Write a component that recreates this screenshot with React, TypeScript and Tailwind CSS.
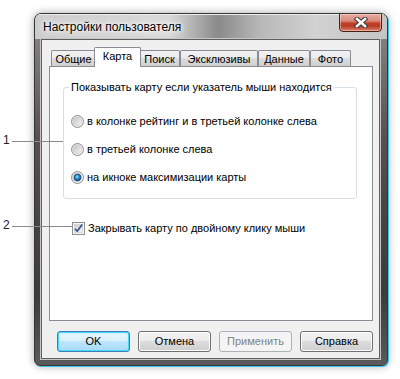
import React from "react";

const font = { fontFamily: '"Liberation Sans", Arial, sans-serif' };

function Radio({ checked }: { checked?: boolean }) {
  return (
    <svg width="13" height="13" viewBox="0 0 13 13" className="shrink-0">
      <defs>
        <linearGradient id="rg-ring" x1="0" y1="0" x2="1" y2="1">
          <stop offset="0" stopColor="#d8d8d8" />
          <stop offset="1" stopColor="#f8f8f8" />
        </linearGradient>
        <linearGradient id="rg-in" x1="0" y1="0" x2="1" y2="1">
          <stop offset="0" stopColor="#c2c2c2" />
          <stop offset="1" stopColor="#f6f6f6" />
        </linearGradient>
        <radialGradient id="rg-dot" cx="0.45" cy="0.4" r="0.6">
          <stop offset="0" stopColor="#8fe0ff" />
          <stop offset="0.45" stopColor="#2b93d6" />
          <stop offset="1" stopColor="#0a3f6e" />
        </radialGradient>
      </defs>
      <circle cx="6.5" cy="6.5" r="6" fill="url(#rg-ring)" stroke="#8e8f8f" strokeWidth="1" />
      <circle cx="6.5" cy="6.5" r="4.2" fill="url(#rg-in)" stroke="#c8c8c8" strokeWidth="0.6" />
      {checked && (
        <circle cx="6.5" cy="6.5" r="3.4" fill="url(#rg-dot)" stroke="#1a4f7a" strokeWidth="0.8" />
      )}
    </svg>
  );
}

function Checkbox() {
  return (
    <svg width="13" height="13" viewBox="0 0 13 13" className="shrink-0">
      <defs>
        <linearGradient id="cb-in" x1="0" y1="0" x2="1" y2="1">
          <stop offset="0" stopColor="#c9cdd3" />
          <stop offset="1" stopColor="#f4f4f4" />
        </linearGradient>
      </defs>
      <rect x="0.5" y="0.5" width="12" height="12" fill="#f4f4f4" stroke="#8e8f8f" />
      <rect x="2.5" y="2.5" width="8" height="8" fill="url(#cb-in)" stroke="#d0d3d8" strokeWidth="0.8" />
      <path d="M3 6.8 L5.2 9.2 L10.2 2.6" fill="none" stroke="#3a4f8a" strokeWidth="1.7" strokeLinejoin="round" />
    </svg>
  );
}

function CloseX() {
  return (
    <svg width="14" height="11" viewBox="0 0 14 11">
      <path d="M3 2 L11 9 M11 2 L3 9" stroke="#3a3a3a" strokeWidth="4.6" strokeLinecap="square" />
      <path d="M3 2 L11 9 M11 2 L3 9" stroke="#ffffff" strokeWidth="2.6" strokeLinecap="square" />
    </svg>
  );
}

function Tab({ label, w, selected }: { label: string; w: number; selected?: boolean }) {
  if (selected) {
    return (
      <div
        className="relative z-10 -mx-[2px] -mb-px h-[20px] flex items-start justify-center pt-[2px] bg-white border-t border-l border-r border-[#898c95] rounded-t-[2px] text-[11px] leading-[13px] text-black"
        style={{ width: w }}
      >
        {label}
      </div>
    );
  }
  return (
    <div
      className="h-[16px] flex items-center justify-center border-t border-l border-r border-[#898c95] rounded-t-[2px] bg-[linear-gradient(to_bottom,#f2f2f2_0%,#ebebeb_50%,#dddddd_50%,#cfcfcf_100%)] text-[11px] text-black leading-none pt-[2px]"
      style={{ width: w }}
    >
      {label}
    </div>
  );
}

function Button({ label, variant }: { label: string; variant?: "default" | "disabled" }) {
  const base =
    "w-[73px] h-[21px] rounded-[3px] border flex items-center justify-center text-[11px]";
  if (variant === "default") {
    return (
      <div
        className={`${base} border-[#3c7fb1] text-black bg-[linear-gradient(to_bottom,#eaf6fd_0%,#d9f0fc_50%,#bee6fd_50%,#a7d9f5_100%)] shadow-[inset_0_0_0_1px_#48d6fb,inset_0_0_2px_1px_#9ee2fb]`}
      >
        {label}
      </div>
    );
  }
  if (variant === "disabled") {
    return (
      <div className={`${base} border-[#adb2b5] text-[#838383] bg-[#f4f4f4]`}>{label}</div>
    );
  }
  return (
    <div
      className={`${base} border-[#707070] text-black bg-[linear-gradient(to_bottom,#f2f2f2_0%,#ebebeb_50%,#dddddd_50%,#cfcfcf_100%)] shadow-[inset_0_0_0_1px_#fcfcfc]`}
    >
      {label}
    </div>
  );
}

function Window() {
  return (
    <div className="w-[354px] h-[353px] rounded-t-[7px] rounded-b-[6px] border border-[#353535] flex flex-col overflow-hidden shadow-[1px_1px_0_#3ec7ef,0_0_8px_rgba(0,0,0,0.35)] bg-[linear-gradient(to_bottom,#8c8c8c_0%,#5b4f4f_35%,#4a4444_55%,#3c3c3c_80%,#5a5a5a_100%)]">
      {/* title bar */}
      <div className="h-[25px] shrink-0 flex items-start bg-[linear-gradient(to_right,#cdcdcd_0%,#d9d9d9_38%,#8a8a8a_52%,#b8b8b8_64%,#d2d2d2_80%,#c4c4c4_100%)] shadow-[inset_0_1px_0_#efefef]">
        <div className="pl-[8px] pt-[6px] text-[12px] leading-[14px] text-black [text-shadow:0_0_6px_#ffffff,0_0_10px_#ffffff,0_0_3px_#ffffff]">
          Настройки пользователя
        </div>
        <div className="ml-auto mr-[5px] -mt-px w-[43px] h-[19px] rounded-b-[4px] border border-[#4b1f16] flex items-center justify-center bg-[linear-gradient(to_bottom,#e8aea3_0%,#d98a7c_40%,#c13f27_55%,#b93a24_70%,#d9826b_100%)] shadow-[inset_0_0_0_1px_rgba(255,220,210,0.5)]">
          <CloseX />
        </div>
      </div>
      {/* client */}
      <div className="ml-[6px] mr-[7px] mb-[6px] flex-1 bg-[#f0f0f0] border border-[#5e5e5e] shadow-[0_0_0_1px_#c7c7c7] flex flex-col pt-[7px] pl-[7px]" style={font}>
        {/* tabs */}
        <div className="h-[19px] flex items-end pl-[2px]">
          <Tab label="Общие" w={45} />
          <Tab label="Карта" w={47} selected />
          <Tab label="Поиск" w={41} />
          <Tab label="Эксклюзивы" w={78} />
          <Tab label="Данные" w={52} />
          <Tab label="Фото" w={41} />
        </div>
        {/* panel */}
        <div className="w-[324px] h-[255px] border border-[#898c95] bg-white flex flex-col pl-[13px]">
          <fieldset className="mt-[13px] w-[294px] border border-[#d5dfe5] rounded-[3px] px-0 pb-[7px] pt-0 m-0">
            <legend className="ml-[5px] px-[2px] text-[11px] leading-[15px] text-black">
              Показывать карту если указатель мыши находится
            </legend>
            <div className="flex flex-col pt-[12px] pl-[7px]">
              <div className="h-[28px] flex items-center gap-[3px] text-[11px] text-black">
                <Radio />
                <span>в колонке рейтинг и в третьей колонке слева</span>
              </div>
              <div className="h-[28px] flex items-center gap-[3px] text-[11px] text-black">
                <Radio />
                <span>в третьей колонке слева</span>
              </div>
              <div className="h-[28px] flex items-center gap-[3px] text-[11px] text-black">
                <Radio checked />
                <span>на икноке максимизации карты</span>
              </div>
            </div>
          </fieldset>
          <div className="mt-[22px] ml-[9px] h-[14px] flex items-center gap-[3px] text-[11px] text-black">
            <Checkbox />
            <span>Закрывать карту по двойному клику мыши</span>
          </div>
        </div>
        {/* buttons */}
        <div className="mt-[10px] pl-[8px] flex gap-[8px]">
          <Button label="OK" variant="default" />
          <Button label="Отмена" />
          <Button label="Применить" variant="disabled" />
          <Button label="Справка" />
        </div>
      </div>
    </div>
  );
}

export default function App() {
  return (
    <div className="w-[400px] h-[379px] bg-white relative overflow-hidden" style={font}>
      <div className="pl-[34px] pt-[13px]">
        <Window />
      </div>
      {/* callouts */}
      <div className="absolute left-[3px] top-[133px] text-[12px] leading-[15px] text-[#222]">1</div>
      <div className="absolute left-[12px] top-[141px] w-[51px] h-px bg-[#8c8c8c]" />
      <div className="absolute left-[3px] top-[218px] text-[12px] leading-[15px] text-[#222]">2</div>
      <div className="absolute left-[12px] top-[226px] w-[61px] h-px bg-[#8c8c8c]" />
    </div>
  );
}
